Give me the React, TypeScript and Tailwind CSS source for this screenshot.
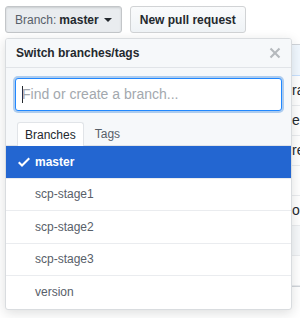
import React from "react";

const branches = ["master", "scp-stage1", "scp-stage2", "scp-stage3", "version"];

const bgRows = [
  { text: "ra", gray: false },
  { text: "es", gray: false },
  { text: "re", gray: false },
  { text: "", gray: false },
  { text: "ou", gray: false },
  { text: "", gray: true },
  { text: "", gray: false },
];

function CheckIcon() {
  return (
    <svg width="12" height="16" viewBox="0 0 12 16" fill="currentColor" aria-hidden="true">
      <path d="M12 5l-8 8-4-4 1.5-1.5L4 10l6.5-6.5L12 5z" />
    </svg>
  );
}

function XIcon() {
  return (
    <svg width="12" height="16" viewBox="0 0 12 16" fill="currentColor" aria-hidden="true">
      <path d="M7.48 8l3.75 3.75-1.48 1.48L6 9.48l-3.75 3.75-1.48-1.48L4.52 8 .77 4.25l1.48-1.48L6 6.52l3.75-3.75 1.48 1.48L7.48 8z" />
    </svg>
  );
}

export default function App() {
  return (
    <div
      className="relative h-[318px] w-[300px] overflow-hidden bg-white text-[#24292e]"
      style={{ fontFamily: '"Liberation Sans", Arial, sans-serif' }}
    >
      {/* Top buttons */}
      <div className="flex gap-[8px] pl-[5px] pt-[6px]">
        <button className="flex h-[27px] items-center rounded-[3px] border border-[#c3c6c9] bg-[#e9ecef] px-[9px] text-[12px] shadow-[inset_0_1px_2px_rgba(27,31,35,0.15)]">
          <span className="text-[#586069]">Branch:</span>
          <span className="ml-[3px] font-bold">master</span>
          <span className="ml-[5px] mt-[1px] h-0 w-0 border-x-[4px] border-t-[4px] border-x-transparent border-t-[#24292e]" />
        </button>
        <button className="flex h-[27px] items-center rounded-[3px] border border-[#d1d3d5] bg-gradient-to-b from-[#fafbfc] to-[#eff3f6] px-[9px] text-[12px] font-bold">
          New pull request
        </button>
      </div>

      {/* Background content behind the dropdown */}
      <div className="ml-[5px] mt-[11px] w-[320px] rounded-[3px] border border-[#d1d5da]">
        <div className="h-[31px] rounded-t-[3px] border-b border-[#c8e1ff] bg-[#f1f8ff]" />
        {bgRows.map((r, i) => (
          <div
            key={i}
            className={`flex h-[30px] items-center border-b border-[#eaecef] pl-[286px] text-[14px] ${r.gray ? "bg-[#f6f8fa]" : ""}`}
          >
            {r.text}
          </div>
        ))}
      </div>

      {/* Dropdown */}
      <div className="absolute left-[5px] top-[38px] w-[287px] overflow-hidden rounded-[3px] border border-[#d9dcdf] bg-white shadow-[0_3px_12px_rgba(27,31,35,0.15)]">
        <div className="flex h-[29px] items-center justify-between border-b border-[#e1e4e8] bg-[#f6f8fa] px-[10px]">
          <span className="text-[12px] font-bold">Switch branches/tags</span>
          <span className="text-[#b5b9bd]">
            <XIcon />
          </span>
        </div>
        <div className="bg-[#f6f8fa] px-[9px] pb-[11px] pt-[10px]">
          <div className="flex h-[33px] items-center rounded-[3px] border border-[#2188ff] bg-white px-[6px] text-[14px] text-[#a3a8ae] shadow-[0_0_0_2px_rgba(3,102,214,0.3)]">
            <span className="-mr-[1px] h-[17px] w-[1px] bg-[#24292e]" />
            Find or create a branch...
          </div>
        </div>
        <div className="flex border-b border-[#e1e4e8] bg-[#f6f8fa] pl-[11px]">
          <div className="-mb-px rounded-t-[3px] border border-b-0 border-[#e1e4e8] bg-white px-[7px] pb-[4px] pt-[5px] text-[12px] leading-[14px]">
            Branches
          </div>
          <div className="px-[11px] pb-[4px] pt-[5px] text-[12px] leading-[14px] text-[#586069]">Tags</div>
        </div>
        {branches.map((b, i) => (
          <div
            key={b}
            className={`flex h-[32.5px] items-center border-b border-[#eaecef] text-[12px] last:border-b-0 ${
              i === 0 ? "bg-[#2366d1] font-bold text-white" : "text-[#586069]"
            }`}
          >
            <span className="flex w-[29px] justify-end pr-[5px]">{i === 0 ? <CheckIcon /> : null}</span>
            {b}
          </div>
        ))}
      </div>
    </div>
  );
}
